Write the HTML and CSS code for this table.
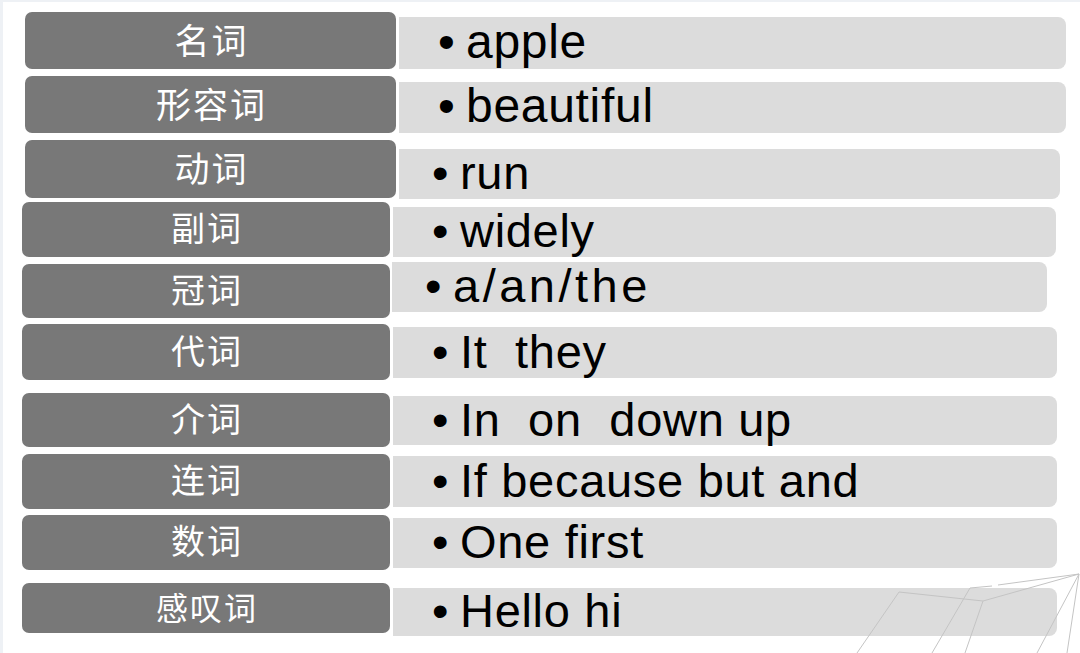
FILE: index.html
```html
<!DOCTYPE html>
<html lang="zh-CN">
<head>
<meta charset="utf-8">
<title>词性</title>
<link rel="stylesheet" href="styles.css">
</head>
<body>
<div class="slide">
  <div class="rows">
    <div class="row row-1 row--wide">
      <div class="label">名词</div>
      <div class="item"><span class="bullet">•</span><span class="txt">apple</span></div>
    </div>
    <div class="row row-2 row--wide">
      <div class="label">形容词</div>
      <div class="item"><span class="bullet">•</span><span class="txt">beautiful</span></div>
    </div>
    <div class="row row-3 row--wide">
      <div class="label">动词</div>
      <div class="item item--tight"><span class="bullet">•</span><span class="txt">run</span></div>
    </div>
    <div class="row row-4">
      <div class="label">副词</div>
      <div class="item"><span class="bullet">•</span><span class="txt">widely</span></div>
    </div>
    <div class="row row-5">
      <div class="label">冠词</div>
      <div class="item item--tight"><span class="bullet">•</span><span class="txt spaced">a/an/the</span></div>
    </div>
    <div class="row row-6">
      <div class="label">代词</div>
      <div class="item"><span class="bullet">•</span><span class="txt">It&nbsp; they</span></div>
    </div>
    <div class="row row-7">
      <div class="label">介词</div>
      <div class="item"><span class="bullet">•</span><span class="txt">In&nbsp; on&nbsp; down up</span></div>
    </div>
    <div class="row row-8">
      <div class="label">连词</div>
      <div class="item"><span class="bullet">•</span><span class="txt">If because but and</span></div>
    </div>
    <div class="row row-9">
      <div class="label">数词</div>
      <div class="item"><span class="bullet">•</span><span class="txt">One first</span></div>
    </div>
    <div class="row row-10">
      <div class="label label--small">感叹词</div>
      <div class="item"><span class="bullet">•</span><span class="txt">Hello hi</span></div>
    </div>
  </div>
  <svg class="deco" width="1080" height="653" viewBox="0 0 1080 653" aria-hidden="true">
    <g stroke="#c4c4c4" stroke-width="1" fill="none">
      <line x1="970" y1="588" x2="992" y2="586"/>
      <line x1="998" y1="585" x2="1079" y2="574"/>
      <line x1="1079" y1="574" x2="983" y2="601"/>
      <line x1="983" y1="601" x2="899" y2="592"/>
      <line x1="899" y1="592" x2="857" y2="653"/>
      <line x1="970" y1="588" x2="932" y2="653"/>
      <line x1="983" y1="601" x2="965" y2="653"/>
      <line x1="1079" y1="574" x2="1037" y2="653"/>
      <line x1="1079" y1="574" x2="1067" y2="653"/>
    </g>
  </svg>
</div>
</body>
</html>
```

FILE: styles.css
```css
* { box-sizing: border-box; }

html, body {
  margin: 0;
  padding: 0;
  background: #ffffff;
}

.slide {
  position: relative;
  width: 1080px;
  height: 653px;
  overflow: hidden;
  background: #ffffff;
  box-shadow: inset 3px 2px 0 #eef1f5;
}

.rows {
  display: flex;
  flex-direction: column;
}

.row {
  display: flex;
  align-items: flex-start;
  gap: 3px;
  margin-left: 22px;
}

.label {
  flex: none;
  width: 368px;
  display: flex;
  align-items: center;
  justify-content: center;
  padding-bottom: 5px;
  padding-left: 2px;
  background: #787878;
  border-radius: 7px;
  color: #ffffff;
  font-family: "Noto Sans CJK SC", "Noto Sans", sans-serif;
  font-size: 34px;
  font-weight: 400;
  line-height: 1;
  letter-spacing: 2px;
}

.label--small {
  font-size: 32px;
}

.item {
  flex: none;
  width: 664px;
  display: flex;
  align-items: center;
  padding-left: 39px;
  padding-bottom: 3px;
  background: #dcdcdc;
  border-radius: 0 8px 8px 0;
  color: #000000;
  font-family: "Liberation Sans", Arial, sans-serif;
  font-size: 47px;
  line-height: 1;
  white-space: nowrap;
}

.txt {
  letter-spacing: 0.7px;
}

.item--tight {
  padding-left: 33px;
}

.bullet {
  display: inline-block;
  width: 28px;
}

.spaced {
  letter-spacing: 3.5px;
}

/* wide upper rows */
.row--wide {
  margin-left: 25px;
}
.row--wide .label {
  width: 371px;
  font-size: 35px;
}
.row--wide .item {
  width: 667px;
  font-size: 48px;
}

/* per-row vertical rhythm */
.row-1 { margin-top: 12px; }
.row-1 .label { height: 57px; }
.row-1 .item { margin-top: 5px; height: 52px; }

.row-2 { margin-top: 7px; }
.row-2 .label { height: 57px; }
.row-2 .item { margin-top: 6px; height: 51px; }

.row-3 { margin-top: 7px; }
.row-3 .label { height: 58px; }
.row-3 .item { margin-top: 9px; height: 50px; width: 661px; font-size: 47px; }

.row-4 { margin-top: 3px; }
.row-4 .label { height: 55px; }
.row-4 .item { margin-top: 5px; height: 50px; width: 663px; }

.row-5 { margin-top: 5px; gap: 2px; }
.row-5 .label { margin-top: 2px; height: 54px; }
.row-5 .item { height: 50px; width: 655px; }

.row-6 { margin-top: 6px; }
.row-6 .label { height: 56px; }
.row-6 .item { margin-top: 3px; height: 51px; }

.row-7 { margin-top: 13px; }
.row-7 .label { height: 54px; }
.row-7 .item { margin-top: 3px; height: 49px; }

.row-8 { margin-top: 7px; }
.row-8 .label { height: 55px; }
.row-8 .item { margin-top: 2px; height: 51px; }

.row-9 { margin-top: 6px; }
.row-9 .label { height: 55px; }
.row-9 .item { margin-top: 3px; height: 50px; }

.row-10 { margin-top: 13px; }
.row-10 .label { height: 50px; }
.row-10 .item { margin-top: 5px; height: 48px; }

.deco {
  position: absolute;
  left: 0;
  top: 0;
  pointer-events: none;
}
```
